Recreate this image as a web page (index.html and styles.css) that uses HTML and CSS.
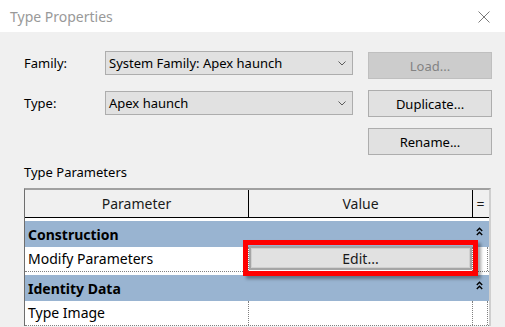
FILE: index.html
```html
<!DOCTYPE html>
<html lang="en">
<head>
    <meta charset="UTF-8">
    <title>Type Properties</title>
    <link rel="stylesheet" href="styles.css">
</head>
<body>
    <div class="titlebar">
        <span class="title">Type Properties</span>
        <svg class="close" width="12" height="12" viewBox="0 0 12 12">
            <path d="M0.5 0.5 L11.5 11.5 M11.5 0.5 L0.5 11.5" stroke="#7a7a7a" stroke-width="1" fill="none"/>
        </svg>
    </div>

    <div class="content">
        <div class="form">
            <label class="field-label">Family:</label>
            <div class="select">
                <span>System Family: Apex haunch</span>
                <svg class="chevron" width="8" height="5" viewBox="0 0 8 5"><path d="M0.5 0.5 L4 4 L7.5 0.5" stroke="#5a5a5a" fill="none"/></svg>
            </div>
            <button class="btn disabled">Load...</button>

            <label class="field-label second">Type:</label>
            <div class="select second">
                <span>Apex haunch</span>
                <svg class="chevron" width="8" height="5" viewBox="0 0 8 5"><path d="M0.5 0.5 L4 4 L7.5 0.5" stroke="#5a5a5a" fill="none"/></svg>
            </div>
            <button class="btn">Duplicate...</button>

            <button class="btn last">Rename...</button>
        </div>

        <div class="section-label">Type Parameters</div>

        <div class="grid">
            <div class="row head">
                <div class="cell param">Parameter</div>
                <div class="cell value">Value</div>
                <div class="cell eq">=</div>
            </div>

            <div class="group">
                <span>Construction</span>
                <svg class="collapse" width="7" height="9" viewBox="0 0 7 9"><path d="M0.8 4 L3.5 1.3 L6.2 4 M0.8 8 L3.5 5.3 L6.2 8" stroke="#000" stroke-width="1.4" fill="none"/></svg>
            </div>
            <div class="row">
                <div class="cell param">Modify Parameters</div>
                <div class="cell value">
                    <div class="edit-wrap">
                        <button class="edit-btn">Edit...</button>
                        <div class="highlight"></div>
                    </div>
                </div>
                <div class="cell eq"></div>
            </div>

            <div class="group">
                <span>Identity Data</span>
                <svg class="collapse" width="7" height="9" viewBox="0 0 7 9"><path d="M0.8 4 L3.5 1.3 L6.2 4 M0.8 8 L3.5 5.3 L6.2 8" stroke="#000" stroke-width="1.4" fill="none"/></svg>
            </div>
            <div class="row">
                <div class="cell param">Type Image</div>
                <div class="cell value"></div>
                <div class="cell eq"></div>
            </div>
        </div>
    </div>
</body>
</html>
```

FILE: styles.css
```css
body {
    margin: 0;
    width: 505px;
    height: 327px;
    overflow: hidden;
    background-color: #f0f0f0;
    font-family: 'Noto Sans', sans-serif;
    color: #000;
}

.titlebar {
    height: 32px;
    background-color: #fff;
    display: flex;
    align-items: center;
    justify-content: space-between;
    padding: 0 15px 0 10px;
}

.title {
    font-size: 14px;
    color: #999;
}

.close {
    margin-top: 2px;
}

.content {
    padding: 19px 0 0 24px;
}

.form {
    display: grid;
    grid-template-columns: 66px 248px 124px;
    column-gap: 15px;
    row-gap: 11px;
    align-items: start;
}

.field-label {
    font-size: 13px;
    line-height: 24px;
}

.field-label.second,
.select.second {
    margin-top: 1px;
}

.select {
    height: 24px;
    box-sizing: border-box;
    background-color: #e1e1e1;
    border: 1px solid #adadad;
    display: flex;
    align-items: center;
    justify-content: space-between;
    padding: 0 6px 0 3px;
    font-size: 13px;
}

.btn {
    height: 27px;
    box-sizing: border-box;
    background-color: #e1e1e1;
    border: 1px solid #adadad;
    font-family: inherit;
    font-size: 13px;
    color: #000;
    padding: 0;
}

.btn.disabled {
    margin-top: 1px;
    background-color: #cccccc;
    border-color: #bfbfbf;
    color: #838383;
}

.btn.last {
    grid-column: 3;
}

.section-label {
    font-size: 13px;
    line-height: 16px;
    margin-top: 9px;
}

.grid {
    margin-top: 8px;
    width: 464px;
    height: 136px;
    overflow: hidden;
    background-color: #fff;
    border-top: 2px solid #a0a0a0;
    border-left: 1px solid #6e6e6e;
    border-right: 2px solid #cfcfcf;
    font-size: 14px;
}

.row {
    display: flex;
    height: 24px;
    border-bottom: 1px dotted #808080;
}

.row.head {
    height: 27px;
    background-color: #f0f0f0;
    border-bottom: 1px solid #000;
}

.cell {
    box-sizing: border-box;
    border-right: 1px dotted #808080;
    line-height: 23px;
    padding-left: 3px;
    white-space: nowrap;
}

.head .cell {
    border-right: 1px solid #000;
    text-align: center;
    line-height: 27px;
    padding-left: 0;
    color: #1a1a1a;
}

.cell.param {
    width: 224px;
}

.cell.value {
    width: 224px;
    padding-left: 0;
}

.cell.eq {
    width: 15px;
    padding-left: 0;
}

.head .cell.eq {
    border-right: none;
}

.group {
    margin-top: 3px;
    height: 26px;
    background-color: #99b4d1;
    display: flex;
    align-items: center;
    justify-content: space-between;
    padding: 0 6px 0 3px;
    font-weight: bold;
}

.group .collapse {
    margin-top: -6px;
}

.edit-wrap {
    position: relative;
    height: 24px;
    margin-top: -1px;
}

.edit-btn {
    width: 100%;
    height: 100%;
    box-sizing: border-box;
    background-color: #e1e1e1;
    border: 2px solid #a5a5a5;
    outline: 1px solid #d0d0d0;
    outline-offset: -3px;
    font-family: inherit;
    font-size: 14px;
    color: #1a1a1a;
    padding: 0;
}

/* red annotation frame around the Edit button */
.highlight {
    position: absolute;
    top: -6px;
    left: -6px;
    right: -6px;
    bottom: -6px;
    border: 5px solid #ff0000;
    box-shadow: 3px 3px 3px rgba(0, 0, 0, 0.35);
}
```
